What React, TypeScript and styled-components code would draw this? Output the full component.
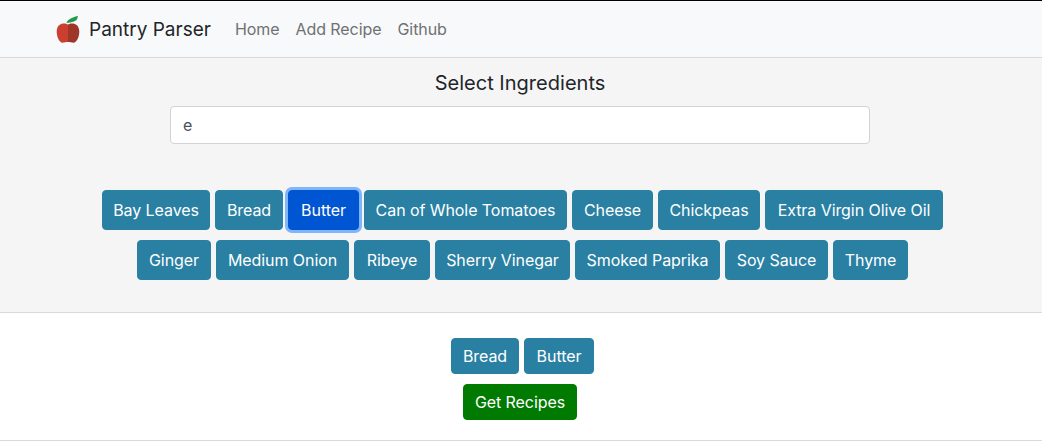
import React from "react";
import styled, { createGlobalStyle } from "styled-components";

const Global = createGlobalStyle`
  html, body { margin: 0; padding: 0; background: #fff; }
  body { font-family: Inter, "Liberation Sans", sans-serif; color: #212529; font-size: 16px; }
  * { box-sizing: border-box; }
`;

const Page = styled.div`
  display: flex;
  flex-direction: column;
  border-top: 1px solid #000;
`;

const Navbar = styled.nav`
  height: 57px;
  background: #f8f9fa;
  border-bottom: 1px solid #d9d9d9;
  display: flex;
  align-items: center;
  padding-left: 56px;
`;

const Brand = styled.a`
  display: flex;
  align-items: center;
  gap: 9px;
  font-size: 19px;
  color: #212529;
  margin-right: 24px;
`;

const NavLink = styled.a`
  color: #6f7173;
  font-size: 16px;
  letter-spacing: -0.07px;
  margin-right: 16px;
`;

const SelectSection = styled.section`
  height: 255px;
  padding-right: 2px;
  background: #f5f5f5;
  border-bottom: 1px solid #d9d9d9;
  display: flex;
  flex-direction: column;
  align-items: center;
`;

const Heading = styled.h2`
  margin: 13px 0 10px;
  font-size: 20px;
  line-height: 25px;
  font-weight: 400;
  letter-spacing: 0.02px;
  color: #212529;
`;

const SearchInput = styled.input`
  width: 700px;
  height: 38px;
  padding: 6px 12px;
  font: 400 16px Inter, sans-serif;
  color: #495057;
  background: #fff;
  border: 1px solid #ced4da;
  border-radius: 4px;
  outline: none;
  margin-bottom: 46px;
`;

const ChipRow = styled.div`
  display: flex;
  justify-content: center;
  gap: 5px;
  padding-left: 5px;
  margin-bottom: 10px;
`;

const Chip = styled.button<{ $active?: boolean; $compact?: boolean; $width: number }>`
  width: ${(p) => p.$width}px;
  height: ${(p) => (p.$compact ? "36px" : "40px")};
  padding: 0;
  font: 400 16px Inter, sans-serif;
  letter-spacing: -0.07px;
  color: #fff;
  white-space: nowrap;
  background: ${(p) => (p.$active ? "#0056d2" : "#2980a3")};
  border: 1px solid ${(p) => (p.$active ? "#0056d2" : "#2980a3")};
  border-radius: 4px;
  box-shadow: ${(p) => (p.$active ? "0 0 0 3px #80b4fb" : "none")};
`;

const SelectedSection = styled.section`
  height: 128px;
  padding: 25px 2px 0 0;
  border-bottom: 1px solid #d9d9d9;
  display: flex;
  flex-direction: column;
  align-items: center;
`;

const GetRecipes = styled(Chip)`
  background: #007a00;
  border-color: #007a00;
`;

const Apple = () => (
  <svg width="24" height="28" viewBox="0 0 24 28" aria-hidden="true">
    <path d="M10.500 8C11 4.500 16 2.500 21.800 .7C21.800 3 21 5.500 18 6.500C15.500 7.300 13 7.800 10.500 8Z" fill="#1f9a4a" />
    <path d="M12 9.500C9 7.500 .9 7.300 .7 16.500C.6 22 3.500 27.700 6.500 27.700C8.500 27.700 10 27 12 27Z" fill="#c93f30" />
    <path d="M12 9.500C15 7.500 23.100 7.300 23.300 16.500C23.400 22 20.500 27.700 17.500 27.700C15.500 27.700 14 27 12 27Z" fill="#a0352a" />
  </svg>
);

const row1: [string, number][] = [
  ["Bay Leaves", 108],
  ["Bread", 68],
  ["Butter", 71],
  ["Can of Whole Tomatoes", 203],
  ["Cheese", 81],
  ["Chickpeas", 102],
  ["Extra Virgin Olive Oil", 178],
];
const row2: [string, number][] = [
  ["Ginger", 74],
  ["Medium Onion", 133],
  ["Ribeye", 76],
  ["Sherry Vinegar", 135],
  ["Smoked Paprika", 145],
  ["Soy Sauce", 103],
  ["Thyme", 75],
];

export default function App() {
  return (
    <Page>
      <Global />
      <Navbar>
        <Brand><Apple />Pantry Parser</Brand>
        <NavLink>Home</NavLink>
        <NavLink>Add Recipe</NavLink>
        <NavLink>Github</NavLink>
      </Navbar>
      <SelectSection>
        <Heading>Select Ingredients</Heading>
        <SearchInput defaultValue="e" />
        <ChipRow>
          {row1.map(([t, w]) => <Chip key={t} $width={w} $active={t === "Butter"}>{t}</Chip>)}
        </ChipRow>
        <ChipRow>
          {row2.map(([t, w]) => <Chip key={t} $width={w}>{t}</Chip>)}
        </ChipRow>
      </SelectSection>
      <SelectedSection>
        <ChipRow>
          <Chip $compact $width={68}>Bread</Chip>
          <Chip $compact $width={70}>Butter</Chip>
        </ChipRow>
        <GetRecipes $compact $width={114}>Get Recipes</GetRecipes>
      </SelectedSection>
    </Page>
  );
}
